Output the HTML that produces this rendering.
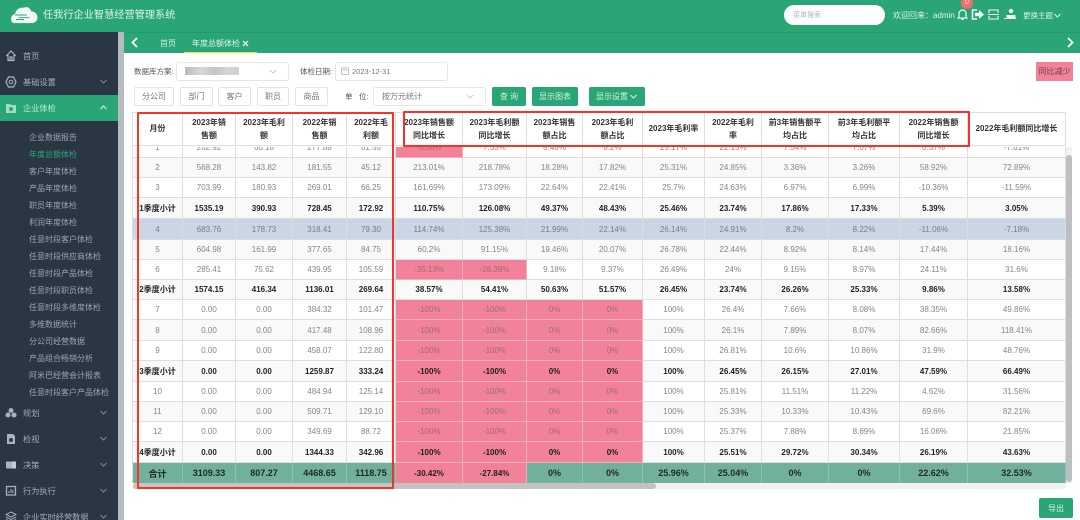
<!DOCTYPE html>
<html lang="zh-CN"><head><meta charset="utf-8"><title>年度总额体检</title>
<style>
*{box-sizing:border-box}
html,body{margin:0;padding:0;width:1080px;height:520px;overflow:hidden;background:#fff;font-family:"Liberation Sans","Noto Sans CJK SC",sans-serif}
body{filter:blur(.3px)}
.t{position:absolute;white-space:nowrap;line-height:12px;margin-top:1px}
#top{position:absolute;left:0;top:0;width:1080px;height:32px;background:#2aa575}
#side{position:absolute;left:0;top:32px;width:118px;height:488px;background:#2a3644}
#gut{position:absolute;left:118px;top:32px;width:6px;height:488px;background:#b9bcbf}
#tabs{position:absolute;left:124px;top:32px;width:956px;height:21px;background:#2aa575;border-top:1px solid #259a6c}
.m{position:absolute;left:23px;font-size:8.2px;color:#a3adb5;line-height:12px;white-space:nowrap;margin-top:1px}
.s{position:absolute;left:29px;font-size:8px;color:#9ba5ad;line-height:12px;white-space:nowrap;margin-top:1px}
.f{position:absolute;border:1px solid #e6e6e6;border-radius:3px;background:#fff}
.b{position:absolute;border:1px solid #e3e3e3;border-radius:2px;background:#fff;font-size:8px;color:#777;text-align:center;line-height:18px;height:19px;top:87px}
.g{position:absolute;background:#2aa575;border-radius:2px;color:#d8f0e6;font-size:8px;text-align:center;line-height:20px;height:19px;top:87px}
.lb{position:absolute;font-size:7.5px;color:#555;line-height:12px;white-space:nowrap;margin-top:1px}
table{border-collapse:separate;border-spacing:0;table-layout:fixed;width:933px}
td,th{border-right:1px solid #dedede;border-bottom:1px solid #dedede;text-align:center;padding:0;overflow:hidden;white-space:nowrap}
td{font-size:8px;color:#858585;background:#fff}
tr.a td{background:#f9f9f9}
tr.k td{background:#c8d6e5;color:#75808c}
tr.u td{background:#f9f9f9;color:#1f1f1f;font-weight:bold}
tr.z td{background:#72b09e;color:#1f2a27;font-weight:bold;font-size:9px;border-color:#8fc2b2;border-bottom:0}
tr td.p{background:#f2829a;color:#a06a76;border-color:#f3adbb}
tr.u td.p,tr.z td.p{color:#1f1f1f}
tr.z td.p{font-size:8px;background:#f2829a}
th{font-size:8px;line-height:13.4px;color:#333;background:#fff;font-weight:bold;height:34px;border-top:1px solid #dedede}
.r{position:absolute;border:2px solid #f5332b;border-radius:1px}
</style></head><body>

<div id="top"></div>
<svg style="position:absolute;left:10px;top:6px" width="28" height="18" viewBox="0 0 30 20"><path d="M4 19c-3 0-4-4-3-7 1-2 3-3 4-3 1-5 5-8 10-7 3-2 7 0 8 4 4 0 7 3 7 7 0 3-3 6-6 6z" fill="#f3f8f6"/><path d="M5 10h13M9 13h12M6 15h9" stroke="#2aa575" stroke-width="1" fill="none"/></svg>
<div class="t" style="left:43px;top:8px;font-size:10.2px;line-height:14px;color:#dff2ea">任我行企业智慧经营管理系统</div>
<div style="position:absolute;left:784px;top:5px;width:101px;height:20px;border-radius:10px;background:#fff"></div>
<div class="t" style="left:793px;top:9px;font-size:7px;color:#b5b5b5">菜单搜索</div>
<div class="t" style="left:893px;top:9px;font-size:8px;color:#dff2ea">欢迎回来：admin</div>
<svg style="position:absolute;left:957px;top:8px" width="11" height="13" viewBox="0 0 11 13"><path d="M2 9V5.5a3.5 3.5 0 0 1 7 0V9l1 1H1zM4.3 11.5h2.4" fill="none" stroke="#eef8f4" stroke-width="1.2"/></svg>
<div style="position:absolute;left:961px;top:-3px;width:12px;height:12px;border-radius:6px;background:#f56c6c;color:#fff;font-size:7px;text-align:center;line-height:12px">0</div>
<svg style="position:absolute;left:971px;top:9px" width="13" height="11" viewBox="0 0 13 11"><path d="M6 1H1.5v9H6" fill="none" stroke="#eef8f4" stroke-width="1.6"/><path d="M4 3.8h4V1l5 4.5L8 10V7.2H4z" fill="#eef8f4"/></svg>
<svg style="position:absolute;left:988px;top:9px" width="11" height="11" viewBox="0 0 11 11"><path d="M1 4V1h9v3M1 7v3h9V7M0 5.5h11" fill="none" stroke="#eef8f4" stroke-width="1.1"/></svg>
<svg style="position:absolute;left:1003px;top:8px" width="14" height="12" viewBox="0 0 14 12"><circle cx="8" cy="3" r="2.2" fill="#eef8f4"/><path d="M4 7.5h8v2H4zM1 10.5h12" stroke="#eef8f4" fill="#eef8f4"/></svg>
<div class="t" style="left:1023px;top:9px;font-size:7.5px;color:#dff2ea">更换主题</div>
<svg style="position:absolute;left:1054px;top:13px" width="7" height="5" viewBox="0 0 7 5"><path d="M.5 1l3 3 3-3" fill="none" stroke="#dff2ea"/></svg>

<div id="side">
<svg style="position:absolute;left:6px;top:18px" width="10" height="12" viewBox="0 0 10 12"><path d="M5 1L.7 5.5H2V10.5H8V5.5H9.3zM4 10.5V7h2v3.5" fill="none" stroke="#a9b3ba" stroke-width="1.2"/></svg>
<div class="m" style="top:18px">首页</div>
<svg style="position:absolute;left:5px;top:44px" width="12" height="12" viewBox="0 0 12 12"><path d="M3.5 1h5L11 6 8.5 11h-5L1 6z" fill="none" stroke="#a9b3ba" stroke-width="1.2"/><circle cx="6" cy="6" r="1.8" fill="none" stroke="#a9b3ba"/></svg>
<div class="m" style="top:44px">基础设置</div>
<svg style="position:absolute;left:100px;top:47px" width="7" height="5" viewBox="0 0 7 5"><path d="M.5 1l3 3 3-3" fill="none" stroke="#7f8a93"/></svg>
<div style="position:absolute;left:0;top:63px;width:118px;height:26px;background:#2aa575"></div>
<svg style="position:absolute;left:5px;top:70px" width="12" height="12" viewBox="0 0 12 12"><path d="M1 2h4l1 1h5v8H1z" fill="#a5dcc5"/><circle cx="6" cy="7" r="2" fill="#2aa575"/></svg>
<div class="m" style="top:70px;color:#bde7d6">企业体检</div>
<svg style="position:absolute;left:100px;top:73px" width="7" height="5" viewBox="0 0 7 5"><path d="M.5 4l3-3 3 3" fill="none" stroke="#e6f5ef"/></svg>
<div class="s" style="top:99px">企业数据报告</div>
<div class="s" style="top:116px;color:#2aa575">年度总额体检</div>
<div class="s" style="top:133px">客户年度体检</div>
<div class="s" style="top:150px">产品年度体检</div>
<div class="s" style="top:167px">职员年度体检</div>
<div class="s" style="top:184px">利润年度体检</div>
<div class="s" style="top:201px">任意时段客户体检</div>
<div class="s" style="top:218px">任意时段供应商体检</div>
<div class="s" style="top:235px">任意时段产品体检</div>
<div class="s" style="top:252px">任意时段职员体检</div>
<div class="s" style="top:269px">任意时段多维度体检</div>
<div class="s" style="top:286px">多维数据统计</div>
<div class="s" style="top:303px">分公司经营数据</div>
<div class="s" style="top:320px">产品组合畅销分析</div>
<div class="s" style="top:337px">阿米巴经营会计报表</div>
<div class="s" style="top:354px">任意时段客户产品体检</div>
<svg style="position:absolute;left:5px;top:375px" width="12" height="12" viewBox="0 0 12 12"><circle cx="6" cy="3.5" r="2.5" fill="#a9b3ba"/><circle cx="3" cy="8" r="2.5" fill="#a9b3ba"/><circle cx="9" cy="8" r="2.5" fill="#a9b3ba"/></svg>
<div class="m" style="top:375px">规划</div>
<svg style="position:absolute;left:5px;top:401px" width="12" height="12" viewBox="0 0 12 12"><path d="M2 1h6l2 2v8H2z" fill="#a9b3ba"/><circle cx="6" cy="7" r="2" fill="#2a3644"/></svg>
<div class="m" style="top:401px">检视</div>
<svg style="position:absolute;left:5px;top:427px" width="12" height="12" viewBox="0 0 12 12"><rect x="1" y="2.5" width="10" height="7" rx="1" fill="#a9b3ba"/><rect x="7" y="2.5" width="4" height="7" fill="#c6ccd1"/></svg>
<div class="m" style="top:427px">决策</div>
<svg style="position:absolute;left:5px;top:453px" width="12" height="12" viewBox="0 0 12 12"><rect x="1.5" y="1.5" width="9" height="8.5" fill="none" stroke="#a9b3ba" stroke-width="1.3"/><path d="M4 8V6M6 8V4M8 8V5" stroke="#a9b3ba"/></svg>
<div class="m" style="top:453px">行为执行</div>
<svg style="position:absolute;left:5px;top:479px" width="12" height="12" viewBox="0 0 12 12"><path d="M6 1l5 2.500-5 2.500-5-2.500zM1 6l5 2.500L11 6M1 8.500L6 11l5-2.500" fill="none" stroke="#a9b3ba"/></svg>
<div class="m" style="top:479px">企业实时经营数据</div>
<svg style="position:absolute;left:100px;top:378px" width="7" height="5" viewBox="0 0 7 5"><path d="M.5 1l3 3 3-3" fill="none" stroke="#7f8a93"/></svg>
<svg style="position:absolute;left:100px;top:404px" width="7" height="5" viewBox="0 0 7 5"><path d="M.5 1l3 3 3-3" fill="none" stroke="#7f8a93"/></svg>
<svg style="position:absolute;left:100px;top:430px" width="7" height="5" viewBox="0 0 7 5"><path d="M.5 1l3 3 3-3" fill="none" stroke="#7f8a93"/></svg>
<svg style="position:absolute;left:100px;top:456px" width="7" height="5" viewBox="0 0 7 5"><path d="M.5 1l3 3 3-3" fill="none" stroke="#7f8a93"/></svg>
<svg style="position:absolute;left:100px;top:482px" width="7" height="5" viewBox="0 0 7 5"><path d="M.5 1l3 3 3-3" fill="none" stroke="#7f8a93"/></svg>
</div>
<div id="gut"></div>

<div id="tabs"></div>
<svg style="position:absolute;left:131px;top:37px" width="7" height="11" viewBox="0 0 7 11"><path d="M6 1L1.500 5.500 6 10" fill="none" stroke="#fff" stroke-width="1.800"/></svg>
<div class="t" style="left:160px;top:37px;font-size:8px;color:#cdeee0">首页</div>
<div class="t" style="left:192px;top:37px;font-size:8px;color:#e0f5ec">年度总额体检</div>
<svg style="position:absolute;left:242px;top:40px" width="7" height="7" viewBox="0 0 7 7"><path d="M1 1l5 5M6 1L1 6" stroke="#fff" stroke-width="1.200"/></svg>
<div style="position:absolute;left:184px;top:52px;width:73px;height:1px;background:#e8e040"></div>
<svg style="position:absolute;left:1067px;top:37px" width="7" height="11" viewBox="0 0 7 11"><path d="M1 1l4.500 4.500L1 10" fill="none" stroke="#fff" stroke-width="1.800"/></svg>

<div class="lb" style="left:134px;top:65px">数据库方案:</div>
<div class="f" style="left:176px;top:62px;width:113px;height:19px"></div>
<div style="position:absolute;left:185px;top:67px;width:54px;height:8px;background:linear-gradient(90deg,#bbb,#d8d8d8 30%,#c4c4c4 55%,#d6d6d6 80%,#cfcfcf)"></div>
<svg style="position:absolute;left:269px;top:69px" width="8" height="5" viewBox="0 0 8 5"><path d="M.5 1l3.500 3 3.500-3" fill="none" stroke="#c8c8c8"/></svg>
<div class="lb" style="left:300px;top:65px">体检日期:</div>
<div class="f" style="left:335px;top:62px;width:113px;height:19px"></div>
<svg style="position:absolute;left:341px;top:67px" width="8" height="8" viewBox="0 0 8 8"><rect x=".5" y="1" width="7" height="6.500" fill="none" stroke="#c4c4c4"/><path d="M.5 3h7" stroke="#c4c4c4"/></svg>
<div class="t" style="left:352px;top:65px;font-size:7.5px;color:#777">2023-12-31</div>
<div style="position:absolute;left:1036px;top:62px;width:37px;height:19px;background:#f2829a;color:#6b3f4a;font-size:8px;text-align:center;line-height:20px">同比减少</div>

<div class="b" style="left:134px;width:40px">分公司</div>
<div class="b" style="left:180px;width:33px">部门</div>
<div class="b" style="left:218px;width:33px">客户</div>
<div class="b" style="left:257px;width:32px">职员</div>
<div class="b" style="left:295px;width:33px">商品</div>
<div class="lb" style="left:345px;top:90px">单</div>
<div class="lb" style="left:359px;top:90px">位:</div>
<div class="f" style="left:373px;top:87px;width:113px;height:19px"></div>
<div class="t" style="left:382px;top:90px;font-size:8px;color:#777">按万元统计</div>
<svg style="position:absolute;left:466px;top:94px" width="8" height="5" viewBox="0 0 8 5"><path d="M.5 1l3.500 3 3.500-3" fill="none" stroke="#c8c8c8"/></svg>
<div class="g" style="left:492px;width:34px">查 询</div>
<div class="g" style="left:532px;width:46px">显示图表</div>
<div class="g" style="left:589px;width:56px;padding-right:10px">显示设置</div>
<svg style="position:absolute;left:630px;top:94px" width="7" height="5" viewBox="0 0 7 5"><path d="M.5 1l3 3 3-3" fill="none" stroke="#e0f5ec"/></svg>

<div style="position:absolute;left:132px;top:138px;width:934px;height:345px;overflow:hidden;border-left:1px solid #dedede">
<table><colgroup><col style="width:50px"><col style="width:53px"><col style="width:57px"><col style="width:54px"><col style="width:49px"><col style="width:67px"><col style="width:64px"><col style="width:56px"><col style="width:60px"><col style="width:62px"><col style="width:57px"><col style="width:67px"><col style="width:71px"><col style="width:68px"><col style="width:98px"></colgroup>
<tr style="height:20px"><td>1</td><td>262.92</td><td>66.18</td><td>277.88</td><td>61.55</td><td class="p">-5.38%</td><td>7.53%</td><td>8.46%</td><td>8.2%</td><td>25.17%</td><td>22.15%</td><td>7.54%</td><td>7.07%</td><td>0.37%</td><td>-7.81%</td></tr>
<tr class="a" style="height:20px"><td>2</td><td>568.28</td><td>143.82</td><td>181.55</td><td>45.12</td><td>213.01%</td><td>218.78%</td><td>18.28%</td><td>17.82%</td><td>25.31%</td><td>24.85%</td><td>3.36%</td><td>3.26%</td><td>58.92%</td><td>72.89%</td></tr>
<tr style="height:20px"><td>3</td><td>703.99</td><td>180.93</td><td>269.01</td><td>66.25</td><td>161.69%</td><td>173.09%</td><td>22.64%</td><td>22.41%</td><td>25.7%</td><td>24.63%</td><td>6.97%</td><td>6.99%</td><td>-10.36%</td><td>-11.59%</td></tr>
<tr class="u" style="height:21px"><td>1季度小计</td><td>1535.19</td><td>390.93</td><td>728.45</td><td>172.92</td><td>110.75%</td><td>126.08%</td><td>49.37%</td><td>48.43%</td><td>25.46%</td><td>23.74%</td><td>17.86%</td><td>17.33%</td><td>5.39%</td><td>3.05%</td></tr>
<tr class="k" style="height:21px"><td>4</td><td>683.76</td><td>178.73</td><td>318.41</td><td>79.30</td><td>114.74%</td><td>125.38%</td><td>21.99%</td><td>22.14%</td><td>26.14%</td><td>24.91%</td><td>8.2%</td><td>8.22%</td><td>-11.06%</td><td>-7.18%</td></tr>
<tr class="a" style="height:20px"><td>5</td><td>604.98</td><td>161.99</td><td>377.65</td><td>84.75</td><td>60.2%</td><td>91.15%</td><td>19.46%</td><td>20.07%</td><td>26.78%</td><td>22.44%</td><td>8.92%</td><td>8.14%</td><td>17.44%</td><td>18.16%</td></tr>
<tr style="height:20px"><td>6</td><td>285.41</td><td>75.62</td><td>439.95</td><td>105.59</td><td class="p">-35.13%</td><td class="p">-28.39%</td><td>9.18%</td><td>9.37%</td><td>26.49%</td><td>24%</td><td>9.15%</td><td>8.97%</td><td>24.11%</td><td>31.6%</td></tr>
<tr class="u" style="height:20px"><td>2季度小计</td><td>1574.15</td><td>416.34</td><td>1136.01</td><td>269.64</td><td>38.57%</td><td>54.41%</td><td>50.63%</td><td>51.57%</td><td>26.45%</td><td>23.74%</td><td>26.26%</td><td>25.33%</td><td>9.86%</td><td>13.58%</td></tr>
<tr style="height:20px"><td>7</td><td>0.00</td><td>0.00</td><td>384.32</td><td>101.47</td><td class="p">-100%</td><td class="p">-100%</td><td class="p">0%</td><td class="p">0%</td><td>100%</td><td>26.4%</td><td>7.66%</td><td>8.08%</td><td>38.35%</td><td>49.86%</td></tr>
<tr class="a" style="height:21px"><td>8</td><td>0.00</td><td>0.00</td><td>417.48</td><td>108.96</td><td class="p">-100%</td><td class="p">-100%</td><td class="p">0%</td><td class="p">0%</td><td>100%</td><td>26.1%</td><td>7.89%</td><td>8.07%</td><td>82.66%</td><td>118.41%</td></tr>
<tr style="height:20px"><td>9</td><td>0.00</td><td>0.00</td><td>458.07</td><td>122.80</td><td class="p">-100%</td><td class="p">-100%</td><td class="p">0%</td><td class="p">0%</td><td>100%</td><td>26.81%</td><td>10.6%</td><td>10.86%</td><td>31.9%</td><td>48.76%</td></tr>
<tr class="u" style="height:21px"><td>3季度小计</td><td>0.00</td><td>0.00</td><td>1259.87</td><td>333.24</td><td class="p">-100%</td><td class="p">-100%</td><td class="p">0%</td><td class="p">0%</td><td>100%</td><td>26.45%</td><td>26.15%</td><td>27.01%</td><td>47.59%</td><td>66.49%</td></tr>
<tr style="height:20px"><td>10</td><td>0.00</td><td>0.00</td><td>484.94</td><td>125.14</td><td class="p">-100%</td><td class="p">-100%</td><td class="p">0%</td><td class="p">0%</td><td>100%</td><td>25.81%</td><td>11.51%</td><td>11.22%</td><td>4.62%</td><td>31.56%</td></tr>
<tr class="a" style="height:20px"><td>11</td><td>0.00</td><td>0.00</td><td>509.71</td><td>129.10</td><td class="p">-100%</td><td class="p">-100%</td><td class="p">0%</td><td class="p">0%</td><td>100%</td><td>25.33%</td><td>10.33%</td><td>10.43%</td><td>69.6%</td><td>82.21%</td></tr>
<tr style="height:20px"><td>12</td><td>0.00</td><td>0.00</td><td>349.69</td><td>88.72</td><td class="p">-100%</td><td class="p">-100%</td><td class="p">0%</td><td class="p">0%</td><td>100%</td><td>25.37%</td><td>7.88%</td><td>8.69%</td><td>16.06%</td><td>21.85%</td></tr>
<tr class="u" style="height:21px"><td>4季度小计</td><td>0.00</td><td>0.00</td><td>1344.33</td><td>342.96</td><td class="p">-100%</td><td class="p">-100%</td><td class="p">0%</td><td class="p">0%</td><td>100%</td><td>25.51%</td><td>29.72%</td><td>30.34%</td><td>26.19%</td><td>43.63%</td></tr>
<tr class="z" style="height:20px"><td>合计</td><td>3109.33</td><td>807.27</td><td>4468.65</td><td>1118.75</td><td class="p">-30.42%</td><td class="p">-27.84%</td><td>0%</td><td>0%</td><td>25.96%</td><td>25.04%</td><td>0%</td><td>0%</td><td>22.62%</td><td>32.53%</td></tr>
</table></div>

<div style="position:absolute;left:132px;top:112px;width:934px;height:35px;overflow:hidden;border-left:1px solid #dedede;background:#fff">
<table><colgroup><col style="width:50px"><col style="width:53px"><col style="width:57px"><col style="width:54px"><col style="width:49px"><col style="width:67px"><col style="width:64px"><col style="width:56px"><col style="width:60px"><col style="width:62px"><col style="width:57px"><col style="width:67px"><col style="width:71px"><col style="width:68px"><col style="width:98px"></colgroup>
<tr><th>月份</th><th>2023年销<br>售额</th><th>2023年毛利<br>额</th><th>2022年销<br>售额</th><th>2022年毛<br>利额</th><th>2023年销售额<br>同比增长</th><th>2023年毛利额<br>同比增长</th><th>2023年销售<br>额占比</th><th>2023年毛利<br>额占比</th><th>2023年毛利率</th><th>2022年毛利<br>率</th><th>前3年销售额平<br>均占比</th><th>前3年毛利额平<br>均占比</th><th>2022年销售额<br>同比增长</th><th>2022年毛利额同比增长</th></tr>
</table></div>

<div style="position:absolute;left:1066px;top:147px;width:6px;height:336px;background:#f3f3f3"></div>
<div style="position:absolute;left:1066px;top:155px;width:6px;height:327px;background:#bdbdc2;border-radius:3px"></div>
<div style="position:absolute;left:133px;top:483px;width:933px;height:6px;background:#f1f1f1"></div>
<div style="position:absolute;left:133px;top:483px;width:523px;height:6px;background:#c3c3c3;border-radius:3px"></div>

<div class="r" style="left:137px;top:112px;width:257px;height:377px"></div>
<div class="r" style="left:403px;top:111px;width:567px;height:36px"></div>

<div class="g" style="left:1039px;top:498px;width:34px;height:20px;line-height:21px">导出</div>
</body></html>
